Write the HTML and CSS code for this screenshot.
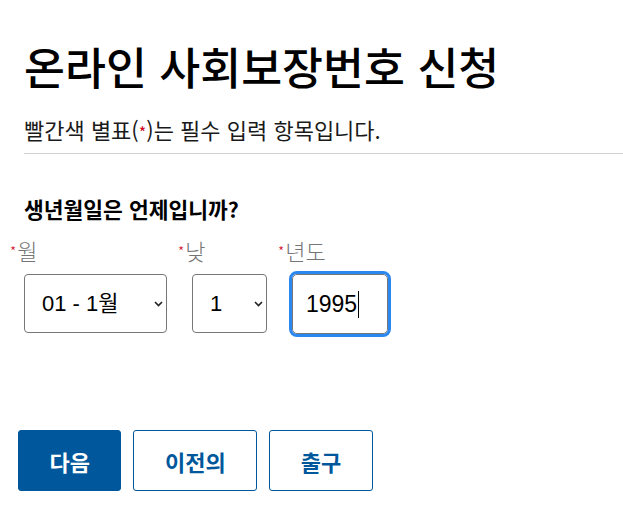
FILE: index.html
```html
<!DOCTYPE html>
<html lang="ko">
<head>
<meta charset="utf-8">
<title>온라인 사회보장번호 신청</title>
<link rel="stylesheet" href="styles.css">
</head>
<body>
<main class="page">
  <h1 class="title">온라인 사회보장번호 신청</h1>
  <p class="note">빨간색 별표(<span class="req">*</span>)는 필수 입력 항목입니다.</p>
  <hr class="rule">
  <fieldset class="dob">
    <legend class="question">생년월일은 언제입니까?</legend>
    <div class="fields">
      <div class="field">
        <label class="label" for="m"><span class="req">*</span>월</label>
        <span class="select-wrap month">
          <select id="m" class="select"><option>01 - 1월</option></select>
          <svg class="chev" width="9" height="6" viewBox="0 0 9 6"><path d="M1 1l3.5 3.5L8 1" fill="none" stroke="#222" stroke-width="1.6"/></svg>
        </span>
      </div>
      <div class="field">
        <label class="label" for="d"><span class="req">*</span>낮</label>
        <span class="select-wrap day">
          <select id="d" class="select"><option>1</option></select>
          <svg class="chev" width="9" height="6" viewBox="0 0 9 6"><path d="M1 1l3.5 3.5L8 1" fill="none" stroke="#222" stroke-width="1.6"/></svg>
        </span>
      </div>
      <div class="field year">
        <label class="label" for="y"><span class="req">*</span>년도</label>
        <span class="input-wrap">
          <input id="y" class="input" type="text" value="1995">
          <span class="caret"></span>
        </span>
      </div>
    </div>
  </fieldset>
  <div class="actions">
    <button class="btn primary">다음</button>
    <button class="btn">이전의</button>
    <button class="btn">출구</button>
  </div>
</main>
</body>
</html>
```

FILE: styles.css
```css
* { box-sizing: border-box; }
html, body { margin: 0; padding: 0; background: #fff; }
body {
  font-family: "Noto Sans CJK KR", "Noto Sans", sans-serif;
  color: #000;
  width: 623px;
  overflow: hidden;
}
.page { padding: 0 0 0 24px; }
.title {
  margin: 0;
  padding-top: 34px;
  font-size: 44.5px;
  font-weight: 500;
  line-height: 64px;
  letter-spacing: 0;
}
.note {
  margin: 17px 0 0;
  font-size: 22px;
  line-height: 28px;
  color: #1a1a1a;
}
.note .req { font-size: 16px; }
.req { color: #d0021b; }
.rule {
  margin: 7px 0 0;
  border: 0;
  border-top: 1px solid #d3d3d3;
  height: 0;
}
.dob {
  border: 0;
  margin: 0;
  padding: 0;
  min-width: 0;
}
.question {
  padding: 0;
  margin-top: 42px;
  font-size: 21.5px;
  font-weight: 700;
  line-height: 26px;
  float: left;
  width: 100%;
}
.fields {
  clear: both;
  display: flex;
  gap: 11px;
  margin-left: -14px;
  padding-top: 15px;
}
.field { display: flex; flex-direction: column; }
.label {
  font-size: 22px;
  line-height: 26px;
  color: #757575;
  font-weight: 300;
  height: 26px;
  white-space: nowrap;
}
.label .req { font-size: 14px; vertical-align: 3px; margin-right: 1px; }
.select-wrap, .input-wrap {
  position: relative;
  display: block;
  margin: 11px 0 0 14px;
}
.select {
  appearance: none;
  -webkit-appearance: none;
  height: 59px;
  border: 1px solid #777;
  border-radius: 4px;
  background: #fff;
  font-family: "Liberation Sans", "Noto Sans CJK KR", sans-serif;
  font-size: 22px;
  color: #000;
  padding: 0 0 0 17px;
  display: block;
}
.month .select { width: 143px; }
.day .select { width: 75px; }
.chev {
  position: absolute;
  right: 4px;
  top: 27px;
  pointer-events: none;
}
.input {
  display: block;
  width: 96px;
  height: 60px;
  border: 1px solid #777;
  border-radius: 5px;
  outline: 3px solid #2b88f0;
  outline-offset: 0;
  font-family: "Liberation Sans", "Noto Sans CJK KR", sans-serif;
  font-size: 23px;
  color: #000;
  padding: 0 0 0 13px;
}
.caret {
  position: absolute;
  left: 66px;
  top: 17px;
  width: 1px;
  height: 27px;
  background: #000;
}
.actions {
  display: flex;
  gap: 12px;
  margin: 96px 0 0 -6px;
}
.btn {
  height: 61px;
  padding: 0 30.5px;
  border: 1px solid #00579b;
  border-radius: 3px;
  background: #fff;
  color: #00579b;
  font-family: "Noto Sans CJK KR", sans-serif;
  font-size: 22px;
  font-weight: 700;
}
.btn.primary { background: #00579b; color: #fff; }
```
